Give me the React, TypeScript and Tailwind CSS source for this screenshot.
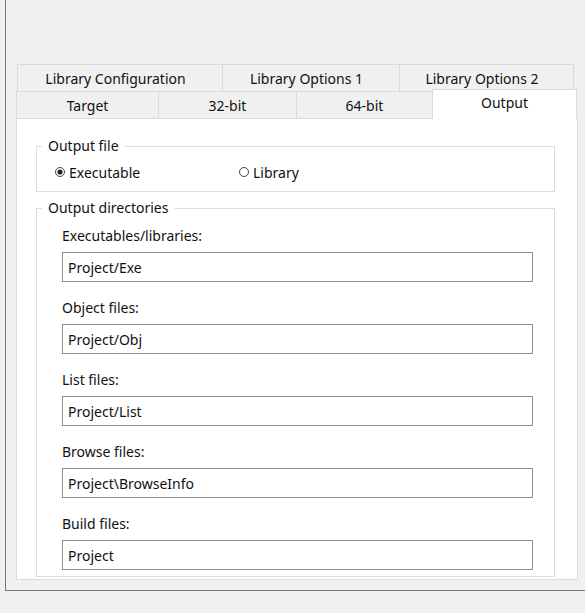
import React from 'react';

const font = { fontFamily: '"Noto Sans", "Open Sans", sans-serif' };

const topTabs = [
  { label: 'Library Configuration', w: 'w-[205px]' },
  { label: 'Library Options 1', w: 'w-[177px]' },
  { label: 'Library Options 2', w: 'w-[175px]' },
];

const bottomTabs = [
  { label: 'Target', w: 'w-[142px]' },
  { label: '32-bit', w: 'w-[138px]' },
  { label: '64-bit', w: 'w-[136px]' },
];

const dirs = [
  { label: 'Executables/libraries:', value: 'Project/Exe' },
  { label: 'Object files:', value: 'Project/Obj' },
  { label: 'List files:', value: 'Project/List' },
  { label: 'Browse files:', value: 'Project\\BrowseInfo' },
  { label: 'Build files:', value: 'Project' },
];

const Radio: React.FC<{ checked?: boolean; label: string }> = ({ checked, label }) => (
  <label className="flex items-center gap-[4px] h-[20px]">
    <svg width="10" height="10" viewBox="0 0 10 10">
      <circle cx="5" cy="5" r="4.5" fill="#fff" stroke="#333" strokeWidth="0.9" />
      {checked && <circle cx="5" cy="5" r="2.6" fill="#222" />}
    </svg>
    <span>{label}</span>
  </label>
);

export default function App() {
  return (
    <div className="w-[585px] h-[613px] bg-[#f0f0f0] overflow-hidden text-[14px] text-[#111]" style={font}>
      <div className="ml-[5px] w-[620px] h-[591px] border-l border-b border-[#7a7a7a] pt-[64px] pl-[10px]">
        {/* tab rows */}
        <div className="flex ml-[1px] h-[27px]">
          {topTabs.map((t, i) => (
            <div
              key={t.label}
              className={`${t.w} flex items-center justify-center pr-[9px] border-t border-l border-[#dadada] ${i === topTabs.length - 1 ? 'border-r' : ''}`}
            >
              {t.label}
            </div>
          ))}
        </div>
        <div className="flex h-[27px] items-end">
          {bottomTabs.map((t) => (
            <div key={t.label} className={`${t.w} h-[27px] flex items-center justify-center border-t border-l border-[#dadada]`}>
              {t.label}
            </div>
          ))}
          <div className="w-[145px] h-[30px] -mb-[1px] relative z-10 bg-white border-t border-l border-r border-[#dadada] flex justify-center pt-[2px]">
            Output
          </div>
        </div>

        {/* page */}
        <div className="w-[562px] h-[462px] bg-white border border-[#dadada] pl-[19px] pt-[17px]">
          <fieldset className="w-[519px] border border-[#dcdcdc] pb-[9px]">
            <legend className="ml-[5px] px-[6px] leading-[20px]">Output file</legend>
            <div className="flex pl-[18px] pt-[6px]">
              <div className="w-[184px]">
                <Radio checked label="Executable" />
              </div>
              <Radio label="Library" />
            </div>
          </fieldset>

          <fieldset className="w-[519px] mt-[6px] border border-[#dcdcdc] pb-[6px]">
            <legend className="ml-[5px] px-[6px] leading-[20px]">Output directories</legend>
            <div className="pl-[25px] pt-[7px] flex flex-col gap-[15px]">
              {dirs.map((d) => (
                <div key={d.label} className="flex flex-col gap-[6px]">
                  <div className="h-[21px] leading-[21px]">{d.label}</div>
                  <div className="w-[471px] h-[30px] border border-[#8f8f8f] bg-white flex items-center px-[5px]">
                    {d.value}
                  </div>
                </div>
              ))}
            </div>
          </fieldset>
        </div>
      </div>
    </div>
  );
}
